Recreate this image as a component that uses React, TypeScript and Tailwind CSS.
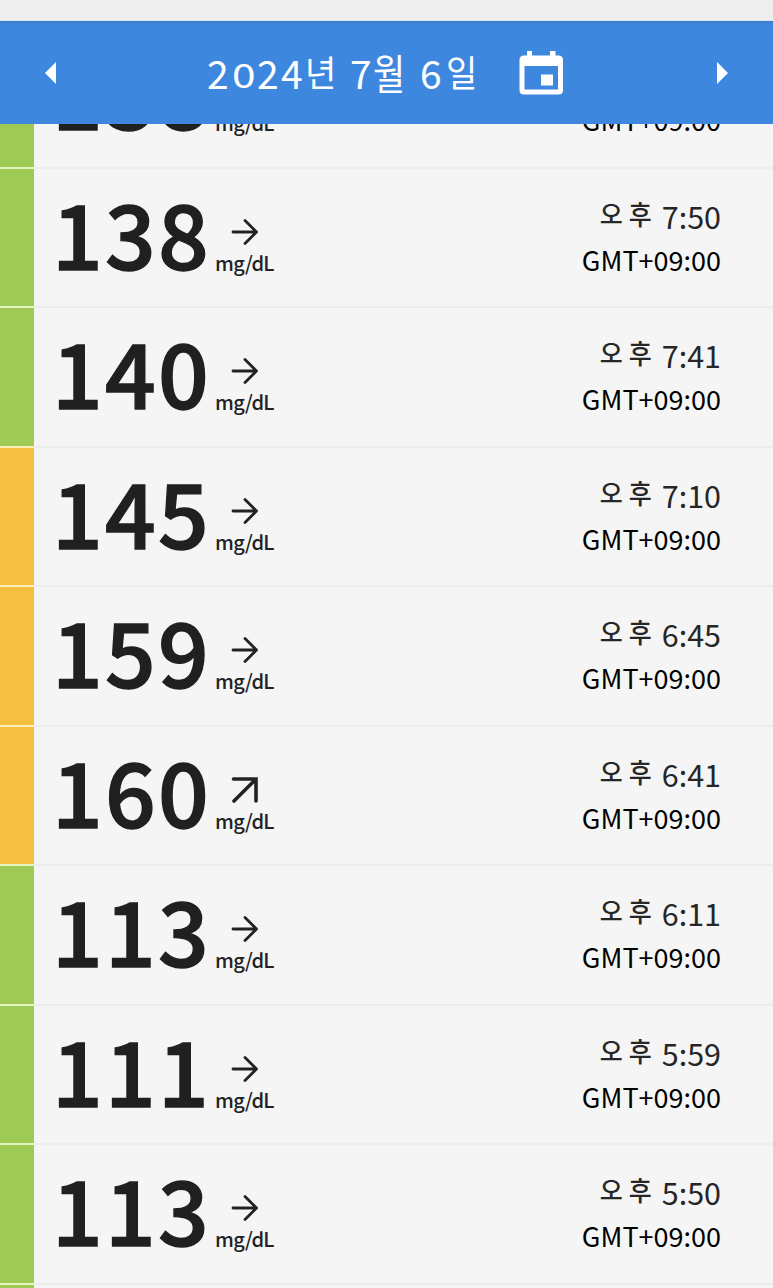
import clsx from 'clsx';

type Reading = {
  value: number;
  time: string;
  trend: 'flat' | 'up';
  level: 'normal' | 'high';
};

const readings: Reading[] = [
  { value: 138, time: '7:55', trend: 'flat', level: 'normal' },
  { value: 138, time: '7:50', trend: 'flat', level: 'normal' },
  { value: 140, time: '7:41', trend: 'flat', level: 'normal' },
  { value: 145, time: '7:10', trend: 'flat', level: 'high' },
  { value: 159, time: '6:45', trend: 'flat', level: 'high' },
  { value: 160, time: '6:41', trend: 'up', level: 'high' },
  { value: 113, time: '6:11', trend: 'flat', level: 'normal' },
  { value: 111, time: '5:59', trend: 'flat', level: 'normal' },
  { value: 113, time: '5:50', trend: 'flat', level: 'normal' },
];

function TrendArrow({ trend }: { trend: Reading['trend'] }) {
  return (
    <svg
      className="h-[28px] w-[28px]"
      viewBox="0 0 28 28"
      fill="none"
      stroke="#222"
      strokeWidth={trend === 'up' ? 3.6 : 2.8}
      strokeLinecap="round"
      strokeLinejoin="round"
    >
      {trend === 'up' ? <path d="M2.500 3H25V25M24.500 3.500L3 25" strokeLinejoin="miter" /> : <path d="M2 14H25.500M14 2.500L25.500 14L14 25.500" />}
    </svg>
  );
}

function DateTitle() {
  return (
    <div className="flex h-[56px] w-[272px] whitespace-pre text-[39px] leading-[54px]">
      <span className="w-[23px]">2</span>
      <span className="ml-[2px] w-[22px] origin-bottom-left scale-x-[1.25] pt-[2px] text-[34px]">0</span>
      <span className="ml-[3px] w-[22px]">2</span>
      <span className="ml-[2px] w-[24px]">4</span>
      <span className="w-[32px] scale-y-[1.08] text-[34px]">년</span>
      <span className="w-[13px]"> </span>
      <span className="w-[23px]">7</span>
      <span className="w-[34px] scale-y-[1.2] text-[35px]">월</span>
      <span className="w-[13px]"> </span>
      <span className="w-[26px]">6</span>
      <span className="w-[33px] scale-y-[1.08] text-[34px]">일</span>
    </div>
  );
}

function Header() {
  return (
    <header className="flex h-[103px] shrink-0 items-center bg-[linear-gradient(#3c7cc8,#3e87de_4px)] text-white">
      <svg className="ml-[45px] h-[22px] w-[11px]" viewBox="0 0 11 22" fill="currentColor">
        <path d="M11 0V22L0 11Z" />
      </svg>
      <div className="ml-[151px]">
        <DateTitle />
      </div>
      <svg className="ml-[40px] h-[44px] w-[44px]" viewBox="0 0 44 44" fill="currentColor">
        <path
          fillRule="evenodd"
          d="M8 0H13V4.500H31V0H36.500V4.500H39.500Q44 4.500 44 9V39Q44 43.500 39.500 43.500H5Q.5 43.500 .5 39V9Q.5 4.500 5 4.500H8ZM5.500 15V38.500H39V15ZM22 23.500H34V34.500H22Z"
        />
      </svg>
      <svg className="ml-[154px] h-[22px] w-[11px]" viewBox="0 0 11 22" fill="currentColor">
        <path d="M0 0V22L11 11Z" />
      </svg>
    </header>
  );
}

function ReadingRow({ value, time, trend, level }: Reading) {
  return (
    <li className="flex h-[139.55px] shrink-0">
      <div
        className={clsx(
          'w-[34px] border-t-2',
          level === 'high' ? 'border-[#fdeeb9] bg-[#f5bf41]' : 'border-[#e2f5c3] bg-[#9fca56]',
        )}
      />
      <div className="flex flex-1 border-t-2 border-[#ededed] pl-[18px]">
        <div className="w-[163px] pt-[18px] text-[89px] leading-[90px] font-medium tracking-[2.3px] text-[#202020] [-webkit-text-stroke:1.4px_#202020]">
          {value}
        </div>
        <div className="w-[80px] pt-[49px] text-[#222]">
          <div className="pl-[16px]">
            <TrendArrow trend={trend} />
          </div>
          <div className="mt-[4px] text-[20px] leading-[25px] font-medium tracking-[-0.7px]">mg/dL</div>
        </div>
        <div className="ml-auto pt-[24px] pr-[52px]">
          <div className="flex justify-end text-[30.5px] leading-[46px] text-[#262626]">
            <span className="mr-[6px] -mt-[2px] text-[25px] leading-[44px] font-medium">오</span>
            <span className="mr-[10px] -mt-[2px] scale-y-[1.1] text-[25px] leading-[44px] font-medium">후</span>
            <span>{time}</span>
          </div>
          <div className="text-right text-[27px] leading-[42px] text-black">GMT+09:00</div>
        </div>
      </div>
    </li>
  );
}

export default function App() {
  return (
    <div className="flex h-[1288px] w-[773px] flex-col overflow-hidden bg-[#f5f5f5] font-['Noto_Sans_CJK_KR',sans-serif]">
      <div className="h-[21px] shrink-0 border-b border-[#d5e6f7] bg-[#eeeeee]" />
      <Header />
      <div className="min-h-0 flex-1 overflow-hidden">
        <ul className="-mt-[96.9px] flex flex-col">
          {readings.map((r) => (
            <ReadingRow key={r.time} {...r} />
          ))}
          <li className="flex h-[6px]">
            <div className="w-[34px] border-t-2 border-[#e2f5c3] bg-[#9fca56]" />
            <div className="flex-1 border-t-2 border-[#ededed]" />
          </li>
        </ul>
      </div>
    </div>
  );
}
